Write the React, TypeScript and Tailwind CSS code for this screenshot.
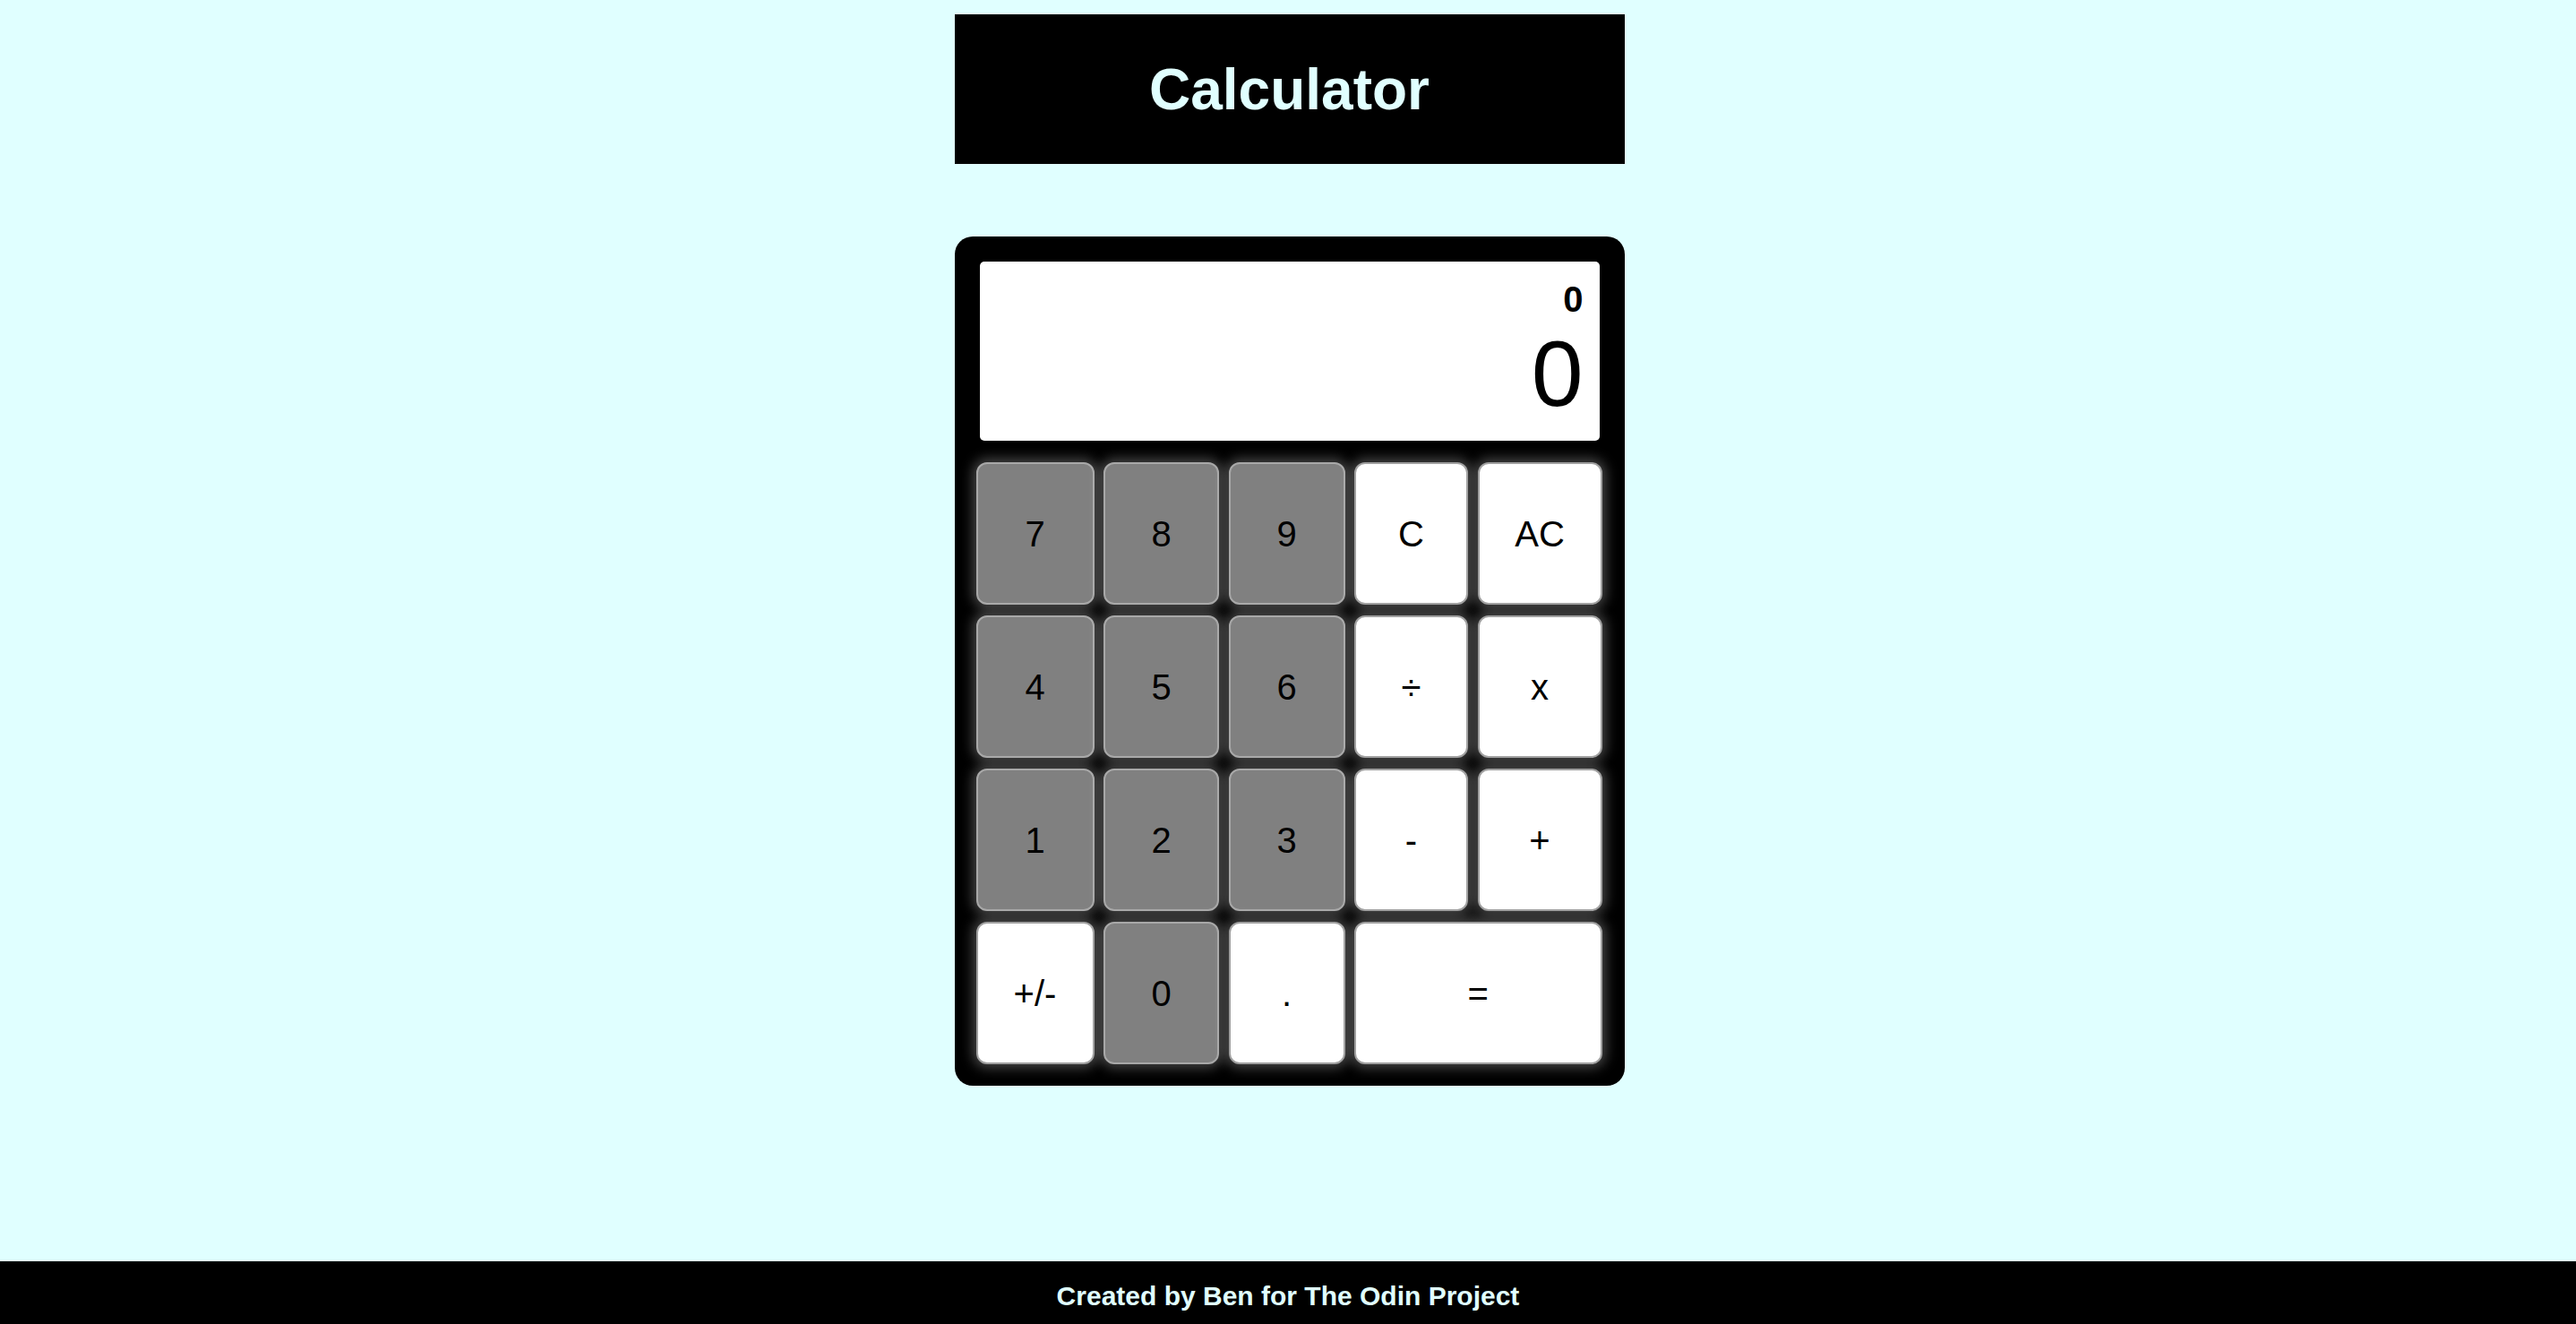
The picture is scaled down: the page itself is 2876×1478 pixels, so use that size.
import React from "react";

type Btn = { label: string; kind: "num" | "op"; span?: number };

const buttons: Btn[] = [
  { label: "7", kind: "num" },
  { label: "8", kind: "num" },
  { label: "9", kind: "num" },
  { label: "C", kind: "op" },
  { label: "AC", kind: "op" },
  { label: "4", kind: "num" },
  { label: "5", kind: "num" },
  { label: "6", kind: "num" },
  { label: "÷", kind: "op" },
  { label: "x", kind: "op" },
  { label: "1", kind: "num" },
  { label: "2", kind: "num" },
  { label: "3", kind: "num" },
  { label: "-", kind: "op" },
  { label: "+", kind: "op" },
  { label: "+/-", kind: "op" },
  { label: "0", kind: "num" },
  { label: ".", kind: "op" },
  { label: "=", kind: "op", span: 2 },
];

export default function App() {
  return (
    <div
      className="min-h-screen flex flex-col items-center bg-[#e0ffff]"
      style={{ fontFamily: '"Liberation Sans", Arial, sans-serif' }}
    >
      <header className="mt-[16px] ml-[3px] w-[748px] h-[167px] bg-black flex items-center justify-center">
        <h1 className="text-[64px] font-bold text-[#e0ffff] leading-[74px]">Calculator</h1>
      </header>

      <div className="mt-[81px] ml-[3px] w-[748px] bg-black rounded-[20px] px-[24px] pt-[28px] pb-[24px] flex flex-col">
        <div className="mx-[4px] h-[200px] bg-white rounded-[5px] pt-[19px] pr-[18px] flex flex-col items-end">
          <div className="text-[40px] font-bold leading-[46px] text-black">0</div>
          <div className="text-[104px] leading-[120px] text-black">0</div>
        </div>

        <div className="mt-[24px] grid grid-cols-[132px_129px_130px_127px_139px] auto-rows-[159px] gap-x-[10.5px] gap-y-[12px]">
          {buttons.map((b) => (
            <button
              key={b.label}
              className={
                "flex items-center justify-center rounded-[12px] border-2 text-[40px] leading-none text-black shadow-[0_0_14px_4px_rgba(255,255,255,0.28)] " +
                (b.kind === "num"
                  ? "bg-[#808080] border-[#a8a8a8]"
                  : "bg-white border-[#a0a0a0]") +
                (b.span === 2 ? " col-span-2" : "")
              }
            >
              {b.label}
            </button>
          ))}
        </div>
      </div>

      <footer className="mt-auto w-full h-[70px] bg-black flex items-center justify-center pt-[8px]">
        <span className="text-[30px] font-bold text-[#e0ffff] leading-none">
          Created by Ben for The Odin Project
        </span>
      </footer>
    </div>
  );
}
